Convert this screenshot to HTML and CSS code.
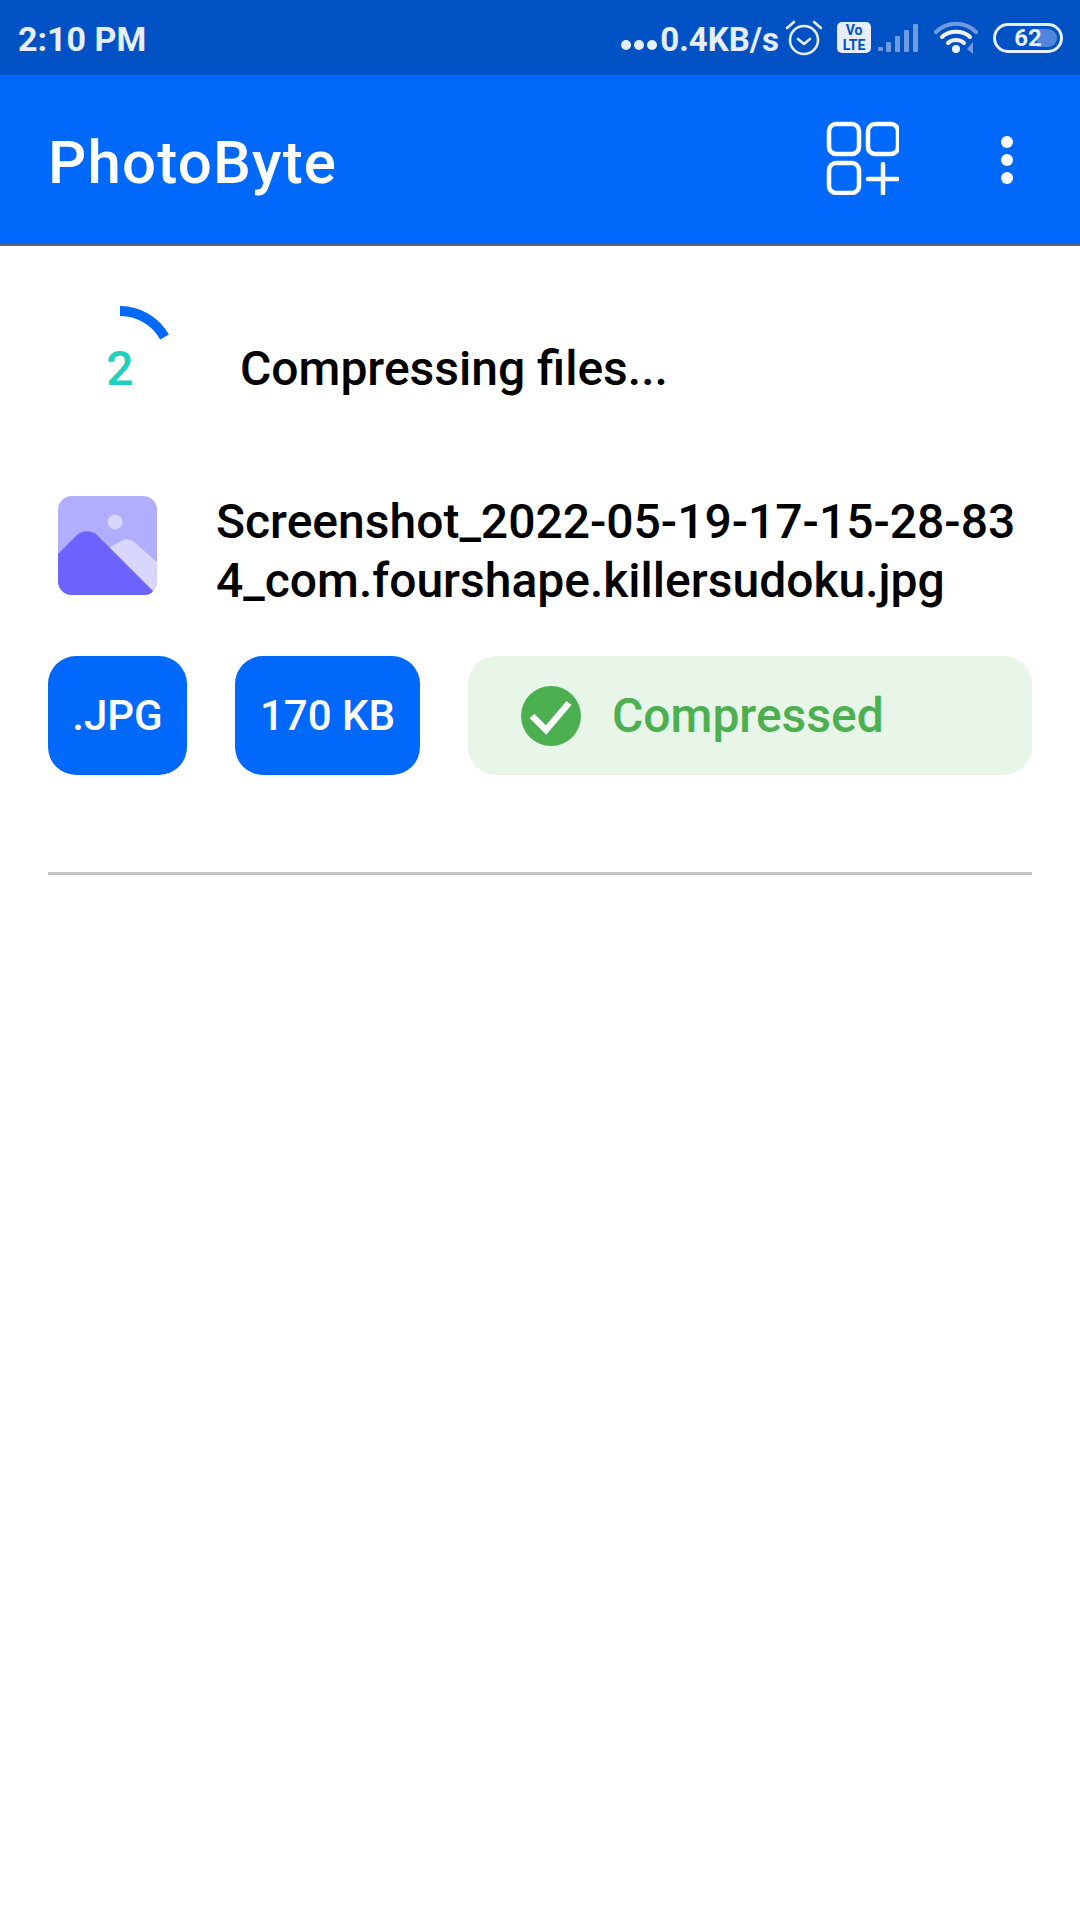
FILE: index.html
```html
<!DOCTYPE html>
<html>
<head>
  <title>PhotoByte</title>
  <link rel="stylesheet" href="styles.css">
</head>
<body>
  <div class="status-bar">
    <span class="clock">2:10 PM</span>
    <div class="status-right">
      <span class="dots"><i></i><i></i><i></i></span>
      <span class="speed">0.4KB/s</span>
      <svg class="alarm" width="38" height="38" viewBox="0 0 38 38" fill="none" stroke="#e6eefb" stroke-width="2.6" stroke-linecap="round" stroke-linejoin="round">
        <circle cx="19" cy="21" r="14"/>
        <path d="M13 20l6 5 6-5"/>
        <path d="M2 9l7-6M36 9l-7-6"/>
      </svg>
      <span class="volte"><span>Vo</span><span>LTE</span></span>
      <svg class="signal" width="40" height="30" viewBox="0 0 40 30" fill="#6f9be0">
        <rect x="0" y="24" width="5" height="4" rx="1"/>
        <rect x="8" y="19" width="5" height="10" rx="1"/>
        <rect x="17" y="13" width="5" height="16" rx="1"/>
        <rect x="26" y="7" width="5" height="22" rx="1"/>
        <rect x="35" y="1" width="5" height="28" rx="1"/>
      </svg>
      <svg class="wifi" width="44" height="36" viewBox="0 0 44 36" fill="none" stroke-linecap="round">
        <path d="M2 12C13 1 31 1 42 12" stroke="#6f9be0" stroke-width="4"/>
        <path d="M8 17C15 10 29 10 36 17" stroke="#eef3fc" stroke-width="4"/>
        <path d="M14 23C18 19 26 19 30 23" stroke="#eef3fc" stroke-width="4"/>
        <circle cx="22" cy="29" r="4" fill="#eef3fc"/>
        <path d="M39 22v12l-6-5z" fill="#6f9be0"/>
      </svg>
      <span class="battery"><span class="battery-fill"></span><span class="battery-num">62</span></span>
    </div>
  </div>

  <header class="app-bar">
    <h1>PhotoByte</h1>
    <svg class="add-grid" width="80" height="80" viewBox="0 0 80 80" fill="none" stroke="#fff" stroke-width="4.5" stroke-linecap="round">
      <rect x="10" y="9" width="30" height="30" rx="7"/>
      <rect x="49" y="9" width="30" height="30" rx="7"/>
      <rect x="10" y="48" width="30" height="30" rx="7"/>
      <path d="M49 64h30M64 49v30"/>
    </svg>
    <div class="more"><i></i><i></i><i></i></div>
  </header>

  <main class="content">
    <div class="progress-row">
      <div class="spinner">
        <svg width="112" height="112" viewBox="0 0 112 112" fill="none">
          <path d="M56 5A51 51 0 0 1 100.5 31" stroke="#0068fb" stroke-width="10"/>
        </svg>
        <span class="count">2</span>
      </div>
      <span class="progress-label">Compressing files...</span>
    </div>

    <div class="file-row">
      <svg class="file-icon" width="99" height="99" viewBox="0 0 99 99">
        <rect width="99" height="99" rx="14" fill="#b1adff"/>
        <circle cx="57" cy="26" r="7.5" fill="#d8d6ff"/>
        <path d="M51 52l12-7c4-2 9-2 13 1l23 20v19c0 8-6 14-14 14h-4z" fill="#d8d6ff"/>
        <path d="M0 58l19-19c6-5 14-5 20 0l56 56c-2 3-5 4-9 4H14C6 99 0 93 0 85z" fill="#6c63ff"/>
      </svg>
      <div class="file-name">Screenshot_2022-05-19-17-15-28-83<br>4_com.fourshape.killersudoku.jpg</div>
    </div>

    <div class="chip-row">
      <span class="chip chip-type">.JPG</span>
      <span class="chip chip-size">170 KB</span>
      <div class="chip-done">
        <svg width="60" height="60" viewBox="0 0 60 60">
          <circle cx="30" cy="30" r="30" fill="#4caf50"/>
          <path d="M11 30l14 14 23-27" fill="none" stroke="#fff" stroke-width="6.5"/>
        </svg>
        <span>Compressed</span>
      </div>
    </div>

    <div class="divider"></div>
  </main>
</body>
</html>
```

FILE: styles.css
```css
body {
  font-family: Roboto, "Liberation Sans", sans-serif;
  margin: 0;
  padding: 0;
  background-color: #fff;
  color: #000;
}

.status-bar {
  display: flex;
  align-items: center;
  justify-content: space-between;
  height: 75px;
  padding: 0 17px 0 18px;
  box-sizing: border-box;
  background-color: #0052c4;
  color: #e6eefb;
}

.clock {
  font-size: 34px;
  font-weight: 700;
  margin-top: 2px;
}

.status-right {
  display: flex;
  align-items: center;
}

.dots {
  display: flex;
  gap: 3px;
  margin-top: 14px;
}

.dots i {
  width: 10px;
  height: 10px;
  border-radius: 50%;
  background-color: #e6eefb;
}

.speed {
  font-size: 33px;
  font-weight: 700;
  margin-left: 3px;
  margin-top: 3px;
}

.alarm {
  margin-left: 6px;
}

.volte {
  display: flex;
  flex-direction: column;
  align-items: center;
  justify-content: center;
  width: 34px;
  height: 31px;
  margin-left: 14px;
  border-radius: 5px;
  background-color: #e6eefb;
  color: #0052c4;
  font-size: 14px;
  font-weight: 700;
  line-height: 15px;
}

.signal {
  margin-left: 7px;
}

.wifi {
  margin-left: 16px;
}

.battery {
  position: relative;
  display: flex;
  align-items: center;
  justify-content: center;
  width: 70px;
  height: 30px;
  margin-left: 15px;
  box-sizing: border-box;
  border: 3px solid #e6eefb;
  border-radius: 15px;
  overflow: hidden;
}

.battery-fill {
  position: absolute;
  right: 3px;
  top: 3px;
  bottom: 3px;
  width: 20px;
  border-radius: 0 10px 10px 0;
  background-color: #4f86dc;
}

.battery-num {
  position: relative;
  font-size: 24px;
  font-weight: 700;
  line-height: 24px;
}

.app-bar {
  display: flex;
  align-items: center;
  height: 169px;
  padding: 0 48px;
  background-color: #0068fb;
  border-bottom: 2px solid #5a6470;
  color: #fff;
}

.app-bar h1 {
  flex: 1;
  margin: 6px 0 0 0;
  font-size: 60px;
  font-weight: 500;
  letter-spacing: 1.2px;
}

.add-grid {
  margin-right: 102px;
  margin-top: -10px;
}

.more {
  display: flex;
  flex-direction: column;
  gap: 6px;
  margin-right: 19px;
}

.more i {
  width: 12px;
  height: 12px;
  border-radius: 50%;
  background-color: #fff;
}

.content {
  padding: 60px 48px 0 48px;
}

.progress-row {
  display: flex;
  align-items: center;
  height: 112px;
}

.spinner {
  position: relative;
  width: 112px;
  height: 112px;
  margin-left: 16px;
}

.count {
  position: absolute;
  left: 0;
  right: 0;
  top: 34px;
  text-align: center;
  font-size: 48px;
  font-weight: 500;
  color: #1fd0bc;
}

.progress-label {
  margin-left: 64px;
  margin-top: 12px;
  font-size: 48px;
  font-weight: 500;
}

.file-row {
  display: flex;
  align-items: flex-start;
  margin-top: 74px;
}

.file-icon {
  margin-left: 10px;
  margin-top: 4px;
}

.file-name {
  margin-left: 59px;
  font-size: 48px;
  font-weight: 500;
  line-height: 59px;
  white-space: nowrap;
}

.chip-row {
  display: flex;
  margin-top: 46px;
}

.chip {
  display: flex;
  align-items: center;
  justify-content: center;
  height: 119px;
  border-radius: 28px;
  background-color: #0068fb;
  color: #fff;
  font-size: 42px;
  font-weight: 500;
}

.chip-type {
  width: 139px;
}

.chip-size {
  width: 185px;
  margin-left: 48px;
}

.chip-done {
  display: flex;
  align-items: center;
  flex: 1;
  height: 119px;
  margin-left: 48px;
  padding-left: 53px;
  border-radius: 28px;
  background-color: #e8f5e9;
  color: #4caf50;
  font-size: 48px;
  font-weight: 500;
}

.chip-done span {
  margin-left: 31px;
}

.divider {
  height: 3px;
  margin-top: 97px;
  background-color: #c4c4c8;
}
```
